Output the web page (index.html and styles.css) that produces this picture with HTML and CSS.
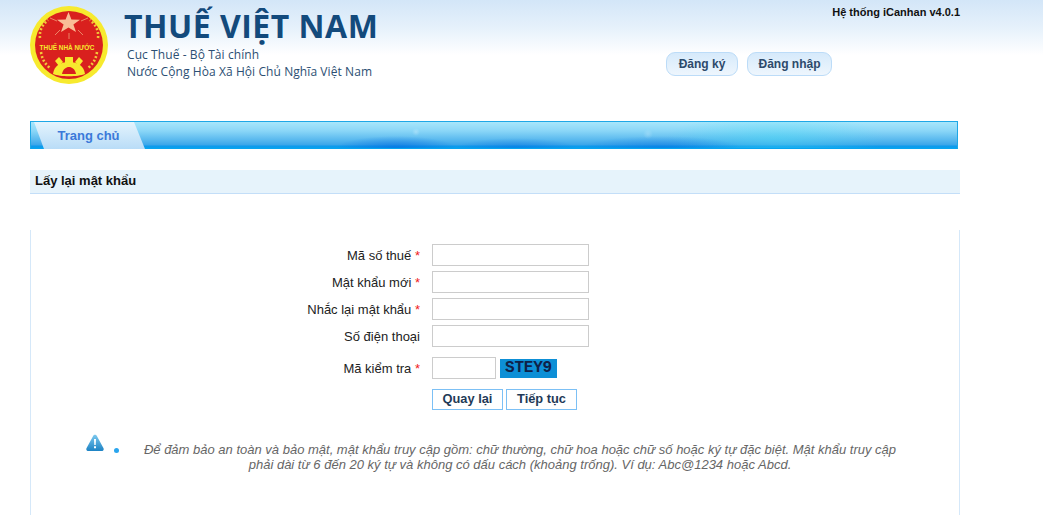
FILE: index.html
```html
<!DOCTYPE html>
<html>

<head>
    <meta charset="UTF-8">
    <title>Thuế Việt Nam</title>
    <link rel="stylesheet" href="styles.css">
</head>

<body>
    <div class="header">
        <svg class="logo" viewBox="0 0 78 78" width="78" height="78">
            <circle cx="39" cy="39" r="39" fill="#f7ea2e"></circle>
            <circle cx="39" cy="39" r="34" fill="#d9201e"></circle>
            <g stroke="#f0a07a" stroke-width="0.8">
                <path d="M39 27 V33 M30 24 L25 29 M48 24 L53 29 M27 15 L20 12 M51 15 L58 12"></path>
            </g>
            <path d="M38.5 6 L41.4 13.6 L50 13.8 L43.4 18.6 L46 26 L38.5 21.6 L31 26 L33.6 18.6 L27 13.8 L35.6 13.6 Z" fill="#f9bd96"></path>
            <g fill="none" stroke="#f3c83a" stroke-width="2.6" stroke-dasharray="2 2">
                <path d="M10 32 C9 24 13 18 18 14"></path>
                <path d="M68 32 C69 24 65 18 60 14"></path>
                <path d="M11 46 C12 53 15 58 20 62"></path>
                <path d="M67 46 C66 53 63 58 58 62"></path>
            </g>
            <path d="M23 68 C24 60 30 56 39 56 C48 56 54 60 55 68 C48 71 30 71 23 68 Z" fill="#f7ea2e"></path>
            <path d="M35 51 H43 V57 H35 Z M25 55 L29 51 L33 56 L29 60 Z M53 55 L49 51 L45 56 L49 60 Z" fill="#f7ea2e"></path>
            <path d="M32 68 C33 63 36 61 39 61 C42 61 45 63 46 68 Z" fill="#d9201e"></path>
            <text class="logo-text" x="37" y="44" text-anchor="middle">THUẾ NHÀ NƯỚC</text>
        </svg>
        <div class="brand">
            <h1>THUẾ VIỆT NAM</h1>
            <p>Cục Thuế - Bộ Tài chính</p>
            <p>Nước Cộng Hòa Xã Hội Chủ Nghĩa Việt Nam</p>
        </div>
        <div class="header-right">
            <div class="version">Hệ thống iCanhan v4.0.1</div>
            <div class="auth">
                <a href="#" class="auth-btn">Đăng ký</a>
                <a href="#" class="auth-btn auth-login">Đăng nhập</a>
            </div>
        </div>
    </div>

    <div class="nav">
        <a href="#" class="tab">Trang chủ</a>
    </div>

    <div class="page-title">Lấy lại mật khẩu</div>

    <div class="content">
        <form class="form">
            <label>Mã số thuế <span class="req">*</span></label>
            <input type="text">
            <label>Mật khẩu mới <span class="req">*</span></label>
            <input type="password">
            <label>Nhắc lại mật khẩu <span class="req">*</span></label>
            <input type="password">
            <label>Số điện thoại</label>
            <input type="text">
            <label class="captcha-label">Mã kiểm tra <span class="req">*</span></label>
            <div class="captcha-row">
                <input type="text" class="captcha-input">
                <div class="captcha">STEY9</div>
            </div>
            <div class="actions">
                <button type="button">Quay lại</button>
                <button type="button">Tiếp tục</button>
            </div>
        </form>

        <div class="notice">
            <svg class="notice-icon" viewBox="0 0 18 18" width="18" height="18">
                <defs>
                    <linearGradient id="warn" x1="0" y1="0" x2="0" y2="1">
                        <stop offset="0" stop-color="#7cc8ee"></stop>
                        <stop offset="1" stop-color="#1d83c4"></stop>
                    </linearGradient>
                </defs>
                <path d="M9 .8 C10 .8 10.6 1.4 11 2.2 L17.4 14 C18.2 15.6 17.4 17 15.6 17 H2.4 C.6 17 -.2 15.6 .6 14 L7 2.2 C7.4 1.4 8 .8 9 .8 Z" fill="url(#warn)"></path>
                <path d="M8 5 H10 L9.7 11 H8.3 Z M8 12.2 H10 V14.2 H8 Z" fill="#fff"></path>
            </svg>
            <span class="notice-dot"></span>
            <p>Để đảm bảo an toàn và bảo mật, mật khẩu truy cập gồm: chữ thường, chữ hoa hoặc chữ số hoặc ký tự đặc biệt. Mật khẩu truy cập phải dài từ 6 đến 20 ký tự và không có dấu cách (khoảng trống). Ví dụ: Abc@1234 hoặc Abcd.</p>
        </div>
    </div>
</body>

</html>
```
FILE: styles.css
```css
body {
    margin: 0;
    padding: 0;
    background-color: #fff;
    font-family: "Liberation Sans", Arial, sans-serif;
    font-size: 13px;
    color: #222;
    overflow: hidden;
}

/* header */
.header {
    display: flex;
    height: 121px;
    padding-left: 30px;
    padding-right: 83px;
    background: linear-gradient(to bottom, #d3e6f8 0, #e6f1fb 28px, #ffffff 55px);
}

.logo {
    margin-top: 6px;
    flex-shrink: 0;
}

.logo-text {
    font-family: "Liberation Sans", Arial, sans-serif;
    font-size: 6.4px;
    font-weight: bold;
    fill: #f7ea2e;
}

.brand {
    margin-left: 16px;
}

.brand h1 {
    margin: 6px 0 0;
    font-family: "Open Sans", sans-serif;
    font-size: 32px;
    line-height: 40px;
    font-weight: 700;
    letter-spacing: 0.5px;
    color: #134a7c;
}

.brand p {
    margin: 0 0 0 3px;
    font-family: "Open Sans", sans-serif;
    font-size: 12px;
    line-height: 17px;
    letter-spacing: 0.08px;
    color: #2c4f73;
}

.header-right {
    margin-left: auto;
    width: 294px;
}

.version {
    margin-top: 6px;
    text-align: right;
    font-size: 11px;
    line-height: 13px;
    font-weight: bold;
    color: #111;
}

.auth {
    display: flex;
    gap: 9px;
    margin-top: 33px;
}

.auth-btn {
    display: block;
    width: 70px;
    height: 22px;
    line-height: 22px;
    text-align: center;
    border: 1px solid #bcdcf8;
    border-radius: 9px;
    background: linear-gradient(to bottom, #d6eafb, #eef6fd);
    font-size: 12px;
    font-weight: bold;
    color: #2d4a6b;
    text-decoration: none;
}

.auth-login {
    width: 83px;
}

/* nav */
.nav {
    width: 926px;
    height: 26px;
    margin-left: 30px;
    border: 1px solid #1ea7e6;
    border-bottom-color: #08a4ee;
    background:
        radial-gradient(circle at 385px 10px, rgba(255, 255, 255, 0.25), transparent 4px),
        radial-gradient(circle at 617px 12px, rgba(255, 255, 255, 0.2), transparent 5px),
        radial-gradient(ellipse 60px 12px at 365px 26px, rgba(5, 110, 225, 0.7), transparent),
        radial-gradient(ellipse 60px 10px at 485px 26px, rgba(5, 110, 225, 0.5), transparent),
        radial-gradient(ellipse 80px 12px at 630px 26px, rgba(5, 110, 225, 0.5), transparent),
        radial-gradient(ellipse 110px 24px at 745px 16px, rgba(70, 220, 245, 0.45), transparent),
        linear-gradient(to bottom, #a8e6fb 0, #8ad6f7 9px, #58b8ee 18px, #3aa5ea 23px, #0c9aec 24px, #0b9fee 26px);
}

.tab {
    display: block;
    width: 111px;
    height: 27px;
    margin-left: 3px;
    padding-right: 2px;
    box-sizing: border-box;
    line-height: 28px;
    text-align: center;
    font-size: 13px;
    font-weight: bold;
    color: #3b79d9;
    text-decoration: none;
    background: linear-gradient(to bottom, #e4f4fd, #b9dcf7);
    clip-path: polygon(0 0, 100px 0, 111px 100%, 10px 100%);
}

/* page title */
.page-title {
    width: 925px;
    height: 23px;
    margin: 21px 0 0 30px;
    padding-left: 5px;
    line-height: 22px;
    background-color: #e6f3fb;
    border-bottom: 1px solid #c3def8;
    font-size: 13px;
    font-weight: bold;
    color: #111;
}

/* form */
.content {
    width: 928px;
    height: 285px;
    margin: 36px 0 0 30px;
    border-left: 1px solid #d5e8f9;
    border-right: 1px solid #d5e8f9;
}

.form {
    display: grid;
    grid-template-columns: 389px 157px;
    column-gap: 12px;
    row-gap: 5px;
    padding-top: 14px;
    align-items: center;
}

.form label {
    height: 22px;
    text-align: right;
    line-height: 24px;
    color: #222;
}

.req {
    color: #f02020;
}

.form input {
    display: block;
    box-sizing: border-box;
    width: 157px;
    height: 22px;
    margin: 0;
    padding: 2px 4px;
    border: 1px solid #ccc;
    background-color: #fff;
}

.captcha-label {
    margin-top: 5px;
}

.captcha-row {
    display: flex;
    align-items: center;
    gap: 4px;
    margin-top: 5px;
}

.form .captcha-input {
    width: 64px;
}

.captcha {
    width: 57px;
    height: 19px;
    line-height: 19px;
    background-color: #0d8fd6;
    text-align: center;
    font-family: "Liberation Mono", monospace;
    font-size: 16px;
    font-weight: bold;
    letter-spacing: -0.2px;
    color: #0f2148;
}

.actions {
    grid-column: 2;
    display: flex;
    gap: 3px;
    margin-top: 5px;
    white-space: nowrap;
}

.actions button {
    box-sizing: border-box;
    flex-shrink: 0;
    width: 71px;
    height: 21px;
    padding: 0 0 2px;
    border: 1px solid #7cc0f5;
    background-color: #fff;
    font-family: "Liberation Sans", Arial, sans-serif;
    font-size: 12.8px;
    font-weight: bold;
    color: #1f3a57;
}

/* notice */
.notice {
    display: flex;
    margin-top: 24px;
    padding-left: 55px;
}

.notice-icon {
    flex-shrink: 0;
}

.notice-dot {
    flex-shrink: 0;
    width: 5px;
    height: 5px;
    margin: 14px 0 0 10px;
    border-radius: 50%;
    background-color: #2aa5ee;
}

.notice p {
    width: 766px;
    margin: 8px 0 0 18px;
    text-align: center;
    font-size: 13px;
    line-height: 15px;
    font-style: italic;
    color: #666;
}
```
